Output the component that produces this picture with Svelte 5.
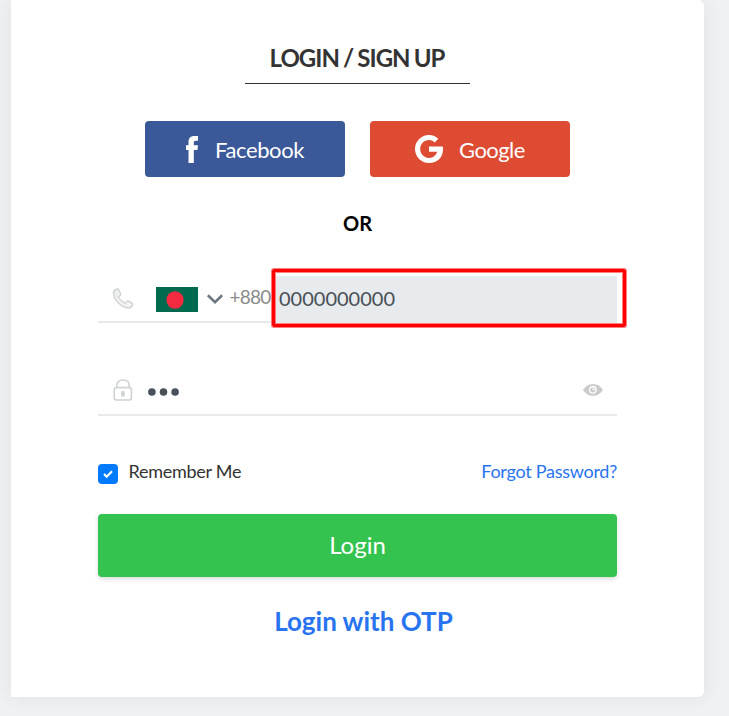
<script>
  let phone = $state('0000000000');
  let remember = $state(true);
</script>

<div class="page">
  <main class="card">
    <h1><span>LOGIN / SIGN UP</span></h1>

    <div class="social">
      <button class="facebook" type="button">
        <svg width="12" height="27" viewBox="0 0 12 27" aria-hidden="true">
          <path d="M2.5 27V14H0V9.3h2.5V6.2C2.5 2 4.7 0 8.3 0H12v4.7H9.7c-1.5 0-1.9.7-1.9 2v2.6H12l-.5 4.7H7.8v13z" fill="#fff" />
        </svg>
        <span>Facebook</span>
      </button>
      <button class="google" type="button">
        <svg width="28" height="28" viewBox="0 0 28 28" aria-hidden="true">
          <path d="M14 11.5h13.8c.2.9.2 1.7.2 2.7C28 22.500 22.400 28 14 28 6.300 28 0 21.700 0 14S6.300 0 14 0c3.800 0 7 1.400 9.400 3.700L19.500 7.400C18.400 6.300 16.600 5.100 14 5.100c-4.900 0-8.800 4-8.800 8.900s3.900 8.900 8.800 8.900c5.600 0 7.700-4 8.100-6.100H14z" fill="#fff" />
        </svg>
        <span>Google</span>
      </button>
    </div>

    <div class="or"><span>OR</span></div>

    <div class="field phone">
      <svg class="handset" width="22" height="21" viewBox="0 0 22 22" fill="#f3f5f4" stroke="#d1d4d3" stroke-width="1.6" stroke-linejoin="round" aria-hidden="true">
        <path d="M4.500 1C2.400 2 .8 3.800 1.100 6c.8 7.200 8.400 14.500 15.400 14.900 2.100.1 3.700-1.500 4.400-3.200.3-.9 0-1.600-.8-2.100l-3.200-1.700c-.8-.5-1.600-.3-2.100.4l-.9 1.200c-.5.6-1.200.7-1.900.2-2.100-1.400-4.200-3.500-5.500-5.600-.4-.7-.2-1.300.4-1.700l1-.7c.7-.5.8-1.200.4-2L6.300 1.700C5.900 1 5.200.7 4.500 1z" />
        <path d="M3.800 3.400c-.7 5 5.700 13 12.700 15.200" fill="none" stroke="#e2e5e4" stroke-width="1" />
      </svg>
      <svg class="flag" width="42" height="25" viewBox="0 0 42 25" aria-hidden="true">
        <rect width="42" height="25" fill="#006a4e" />
        <ellipse cx="19" cy="13" rx="8.600" ry="8.800" fill="#f42a41" />
      </svg>
      <svg class="chevron" width="16" height="10" viewBox="0 0 16 10" fill="none" aria-hidden="true">
        <path d="M.8 1.300 8 8.200 15.200 1.300" stroke="#6c7780" stroke-width="2.600" />
      </svg>
      <span class="code">+880</span>
      <div class="highlight">
        <input class="number" aria-label="Phone number" bind:value={phone} />
      </div>
    </div>

    <div class="field password">
      <svg class="lock" width="20" height="22" viewBox="0 0 20 23" fill="none" stroke="#cfd3d2" stroke-width="1.700" aria-hidden="true">
        <path d="M3.500 9V6.500C3.500 3 6.200 1 10 1s6.500 2 6.500 5.500V9" />
        <rect x=".9" y="9" width="17.900" height="12.900" rx="2" />
        <rect x="8.800" y="13.200" width="2.200" height="4.500" rx="1.100" fill="#c5c9c8" />
      </svg>
      <svg class="dots" width="32" height="8" viewBox="0 0 32 8" fill="#495057" role="img" aria-label="Password entered">
        <circle cx="3.900" cy="4" r="3.800" />
        <circle cx="15.500" cy="4" r="3.800" />
        <circle cx="27.100" cy="4" r="3.800" />
      </svg>
      <svg class="eye" width="20" height="12" viewBox="0 0 20 12" aria-hidden="true">
        <path d="M0 6C2.600 2.200 5.700 0 10 0s7.400 2.200 10 6c-2.600 3.800-5.700 5.800-10 5.800S2.600 9.800 0 6z" fill="#cacaca" />
        <circle cx="9.800" cy="5.800" r="3.300" fill="#cacaca" stroke="#fff" stroke-width="1.300" />
        <path d="M10 3.500v2.300h2.200" fill="none" stroke="#fff" stroke-width="1" />
      </svg>
    </div>

    <div class="options">
      <label>
        <input type="checkbox" bind:checked={remember} />
        <span class="box" class:on={remember}>
          {#if remember}
            <svg width="10" height="8" viewBox="0 0 10 8" fill="none" aria-hidden="true">
              <path d="M1 4l2.700 2.700L9 1.200" stroke="#fff" stroke-width="2.200" />
            </svg>
          {/if}
        </span>
        <span class="remember">Remember Me</span>
      </label>
      <a class="forgot" href="#forgot">Forgot Password?</a>
    </div>

    <button class="login" type="button"><span>Login</span></button>
    <a class="otp" href="#otp">Login with OTP</a>
  </main>
</div>

<style>
  :global(body) { margin: 0; background: #f0f1f3; }
  .page {
    box-sizing: border-box;
    height: 716px;
    padding: 0 25px 19px 11px;
    overflow: hidden;
    background: #f0f1f3;
    font-family: Lato, sans-serif;
  }
  .card {
    box-sizing: border-box;
    height: 697px;
    padding: 39px 87px 0;
    display: flex;
    flex-direction: column;
    align-items: center;
    background: #fff;
    border-radius: 0 6px 6px 0;
    box-shadow: 0 0 20px rgba(0, 0, 0, 0.07);
  }
  svg { display: block; flex: none; }
  button { border: 0; padding: 0; font-family: inherit; color: #fff; }
  a { color: #2874f0; text-decoration: none; }
  h1 {
    box-sizing: border-box;
    width: 225px;
    height: 45px;
    margin: 0;
    padding-right: 1px;
    border-bottom: 1px solid #333;
    color: #333;
    font-size: 24px;
    line-height: 37px;
    font-weight: 700;
    letter-spacing: -0.97px;
    word-spacing: -0.8px;
    text-align: center;
    white-space: nowrap;
  }
  .social { display: flex; gap: 25px; margin-top: 37px; }
  .social button {
    box-sizing: border-box;
    width: 200px;
    height: 56px;
    display: flex;
    align-items: center;
    border-radius: 4px;
    font-size: 22px;
    line-height: 30px;
    letter-spacing: -0.4px;
  }
  .facebook { background: #3b5998; padding-left: 41px; gap: 17px; }
  .social .google { background: #dd4b33; padding-left: 45px; gap: 16px; letter-spacing: -0.55px; }
  .social span { margin-top: 2px; }
  .or {
    margin-top: 31px;
    height: 30px;
    color: #000;
    font-size: 20px;
    line-height: 30px;
    font-weight: 700;
  }
  .field {
    box-sizing: border-box;
    width: 519px;
    display: flex;
    align-items: center;
    border-bottom: 2px solid #e9e9e9;
  }
  .phone { height: 47px; margin-top: 38px; }
  .handset { margin-left: 14px; margin-bottom: 1px; }
  .flag { margin-left: 22px; margin-top: 2px; }
  .chevron { margin-left: 8.5px; margin-top: 1px; }
  .code {
    width: 42.5px;
    margin: 0 0 4px 7px;
    color: #8b8b8b;
    font-size: 19px;
    line-height: 30px;
    letter-spacing: -0.75px;
  }
  .highlight {
    box-sizing: border-box;
    flex: none;
    width: 354px;
    height: 58px;
    margin: 0 -9px 1px 0;
    padding: 4px 0 0 1px;
    display: flex;
    border: 3px solid #f00;
    border-radius: 2px;
    box-shadow: 0 0 0 1px rgba(255, 0, 0, 0.5), inset 0 0 0 1px rgba(255, 0, 0, 0.5);
  }
  .number {
    box-sizing: border-box;
    width: 341px;
    height: 47px;
    padding: 0 3px 3px;
    border: 0;
    border-radius: 0;
    outline: 0;
    background: #e8ebee;
    color: #495057;
    font: 20px Lato, sans-serif;
  }
  .password { height: 47px; margin-top: 46px; padding-bottom: 1px; }
  .lock { margin-left: 14.5px; margin-bottom: 2px; }
  .dots { margin: 1px auto 0 15px; }
  .eye { margin: 0 14px 3px 0; }
  .options {
    width: 519px;
    height: 30px;
    margin-top: 40px;
    display: flex;
    justify-content: space-between;
    font-size: 18px;
    line-height: 30px;
    letter-spacing: -0.26px;
  }
  label { display: flex; }
  label input { position: absolute; opacity: 0; width: 1px; height: 1px; margin: 0; }
  .box {
    width: 20px;
    height: 20px;
    margin-top: 8px;
    display: grid;
    place-items: center;
    border-radius: 4px;
    background: #dee2e6;
  }
  .box.on { background: #007bff; }
  .remember { margin-left: 10.5px; color: #333; }
  .login {
    width: 519px;
    height: 63px;
    flex: none;
    margin-top: 28px;
    padding-bottom: 2px;
    border-radius: 4px;
    background: #34c34f;
    box-shadow: 0 2px 5px rgba(0, 0, 0, 0.14);
    font-size: 24px;
  }
  .otp { margin: 24px 0 0 12px; font-size: 26px; line-height: 40px; font-weight: 700; }
</style>
